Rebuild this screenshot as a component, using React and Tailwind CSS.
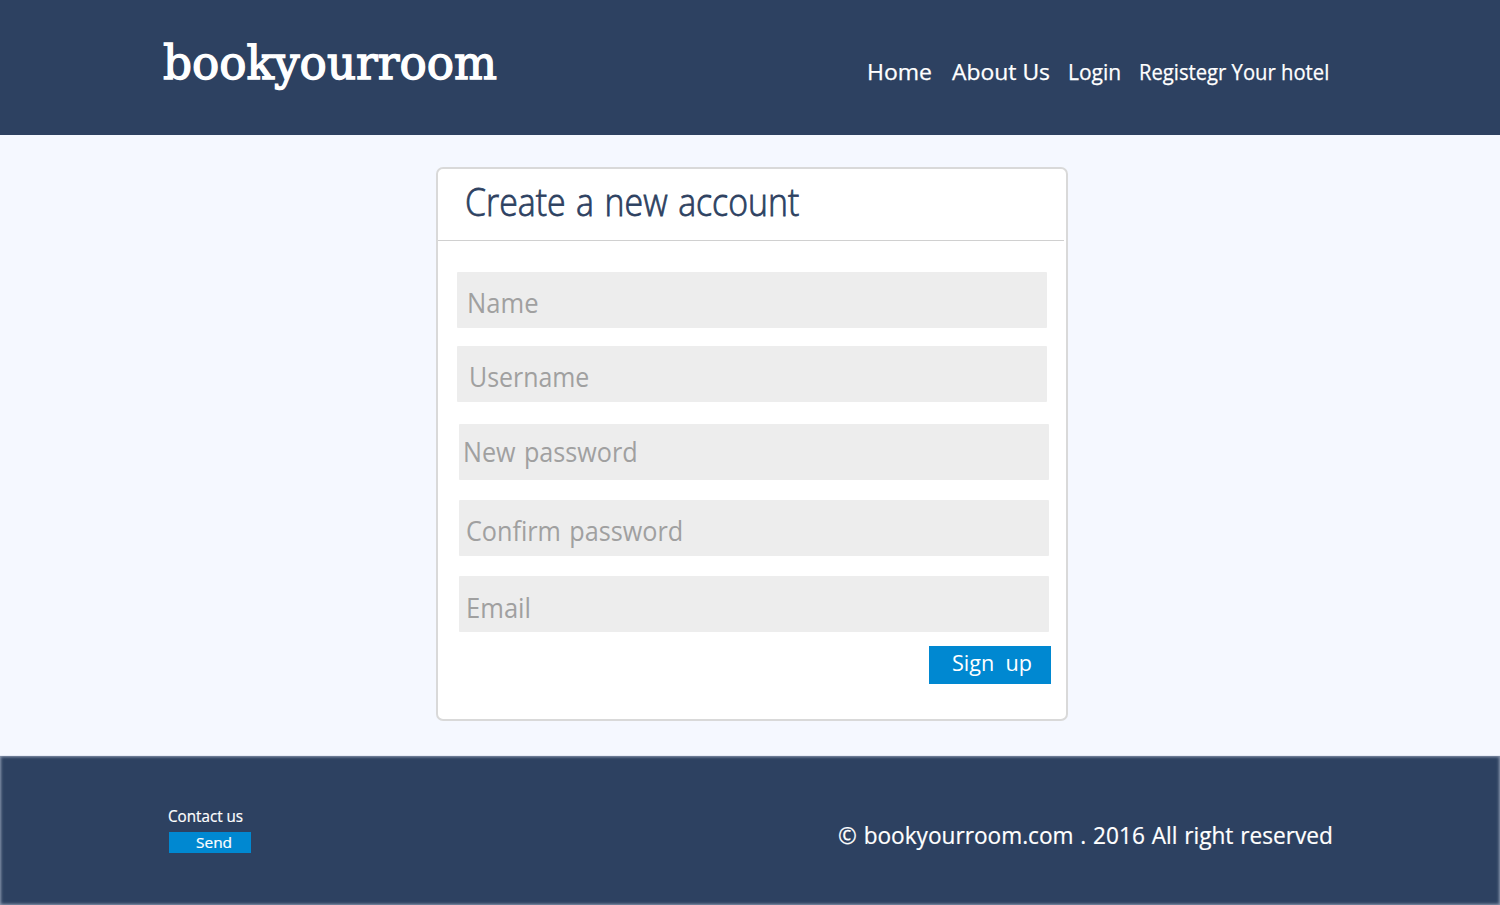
import React from "react";

const navLinks = [
  { label: "Home", box: "w-[84.5px] pt-px", text: "text-[21px] scale-x-[1.095]" },
  { label: "About Us", box: "w-[116.5px] pt-px", text: "text-[21px] scale-x-[1.09]" },
  { label: "Login", box: "w-[70.5px] pt-px", text: "text-[21px] scale-x-[1]" },
  { label: "Registegr Your hotel", box: "w-[191.5px] pt-px", text: "text-[21px] scale-x-[0.963]" },
];

const fields = [
  { label: "Name", box: "ml-[19px] pl-[9.5px] pt-[11px]", text: "scale-x-[0.93]" },
  { label: "Username", box: "ml-[19px] mt-[18px] pl-[11.5px] pt-[11px]", text: "scale-x-[0.905]" },
  { label: "New password", box: "ml-[21px] mt-[22px] pl-[3.5px] pt-[8px]", text: "scale-x-[0.915] [word-spacing:2px]" },
  { label: "Confirm password", box: "ml-[21px] mt-[20px] pl-[7px] pt-[11px]", text: "scale-x-[0.916] [word-spacing:2px]" },
  { label: "Email", box: "ml-[21px] mt-[20px] pl-[6.5px] pt-[12px]", text: "scale-x-[0.93]" },
];

function Header() {
  return (
    <header className="flex h-[135px] justify-between bg-[#2d4161] pl-[162.5px] pr-[170px] text-white">
      <h1 className="mt-[38px] origin-left scale-x-[0.985] font-['DejaVu_Serif',serif] text-[46px] leading-[50px] whitespace-nowrap [-webkit-text-stroke:1.4px_white]">
        bookyourroom
      </h1>
      <nav className="mt-[56px] flex leading-[30px] whitespace-nowrap [-webkit-text-stroke:0.25px_white]">
        {navLinks.map((l) => (
          <a key={l.label} className={`block ${l.box}`}>
            <span className={`inline-block origin-left align-top ${l.text}`}>{l.label}</span>
          </a>
        ))}
      </nav>
    </header>
  );
}

function SignUpCard() {
  return (
    <main className="ml-[436px] mt-[32px] h-[554px] w-[632px] rounded-[7px] border-2 border-[#d9d9d9] bg-white">
      <div className="mr-[2px] h-[72px] border-b border-[#d0d0d0] pl-[26.5px] pt-[7px]">
        <h2 className="inline-block origin-left scale-x-[0.89] align-top text-[38px] leading-[50px] font-light whitespace-nowrap text-[#2d4161] [word-spacing:2px] [-webkit-text-stroke:0.8px_#2d4161]">
          Create a new account
        </h2>
      </div>
      <form className="pt-[31px]">
        {fields.map((f) => (
          <label
            key={f.label}
            className={`block h-[56px] w-[590px] rounded-[1px] bg-[#ededed] text-[27.5px] leading-[40px] whitespace-nowrap text-[#a0a0a0] ${f.box}`}
          >
            <span className={`inline-block origin-left align-top ${f.text}`}>{f.label}</span>
          </label>
        ))}
        <button
          type="button"
          className="mt-[14px] ml-[491px] block h-[38px] w-[122px] bg-[#0088d1] pb-[4px] pl-[22.5px] text-left text-[21px] leading-[30px] text-white"
        >
          <span className="inline-block origin-left scale-x-[1.03] align-top whitespace-pre">{"Sign  up"}</span>
        </button>
      </form>
    </main>
  );
}

function Footer() {
  return (
    <footer className="mt-auto flex h-[149px] justify-between bg-[#2d4161] pl-[168px] pr-[166px] whitespace-nowrap text-white shadow-[inset_0_0_3px_1px_#8d9ab0,0_0_1px_#a9b3c6]">
      <div className="pt-[50px] [-webkit-text-stroke:0.2px_white]">
        <p className="w-[84px] text-[16px] leading-[20px]">
          <span className="inline-block origin-left scale-x-[0.95] align-top">Contact us</span>
        </p>
        <button
          type="button"
          className="mt-[6px] ml-px block h-[21px] w-[82px] bg-[#0088d1] pb-px pl-[27px] text-left text-[15px] leading-[20px]"
        >
          <span className="inline-block origin-left scale-x-[1.03] align-top">Send</span>
        </button>
      </div>
      <p className="w-[496px] pt-[64px] text-[24px] leading-[30px] [-webkit-text-stroke:0.2px_white]">
        <span className="inline-block origin-left scale-x-[0.943] align-top [word-spacing:1px]">
          © bookyourroom.com . 2016 All right reserved
        </span>
      </p>
    </footer>
  );
}

export default function App() {
  return (
    <div className="flex h-[905px] w-[1500px] flex-col overflow-hidden bg-[#f5f8ff] font-['Open_Sans',sans-serif]">
      <Header />
      <SignUpCard />
      <Footer />
    </div>
  );
}
